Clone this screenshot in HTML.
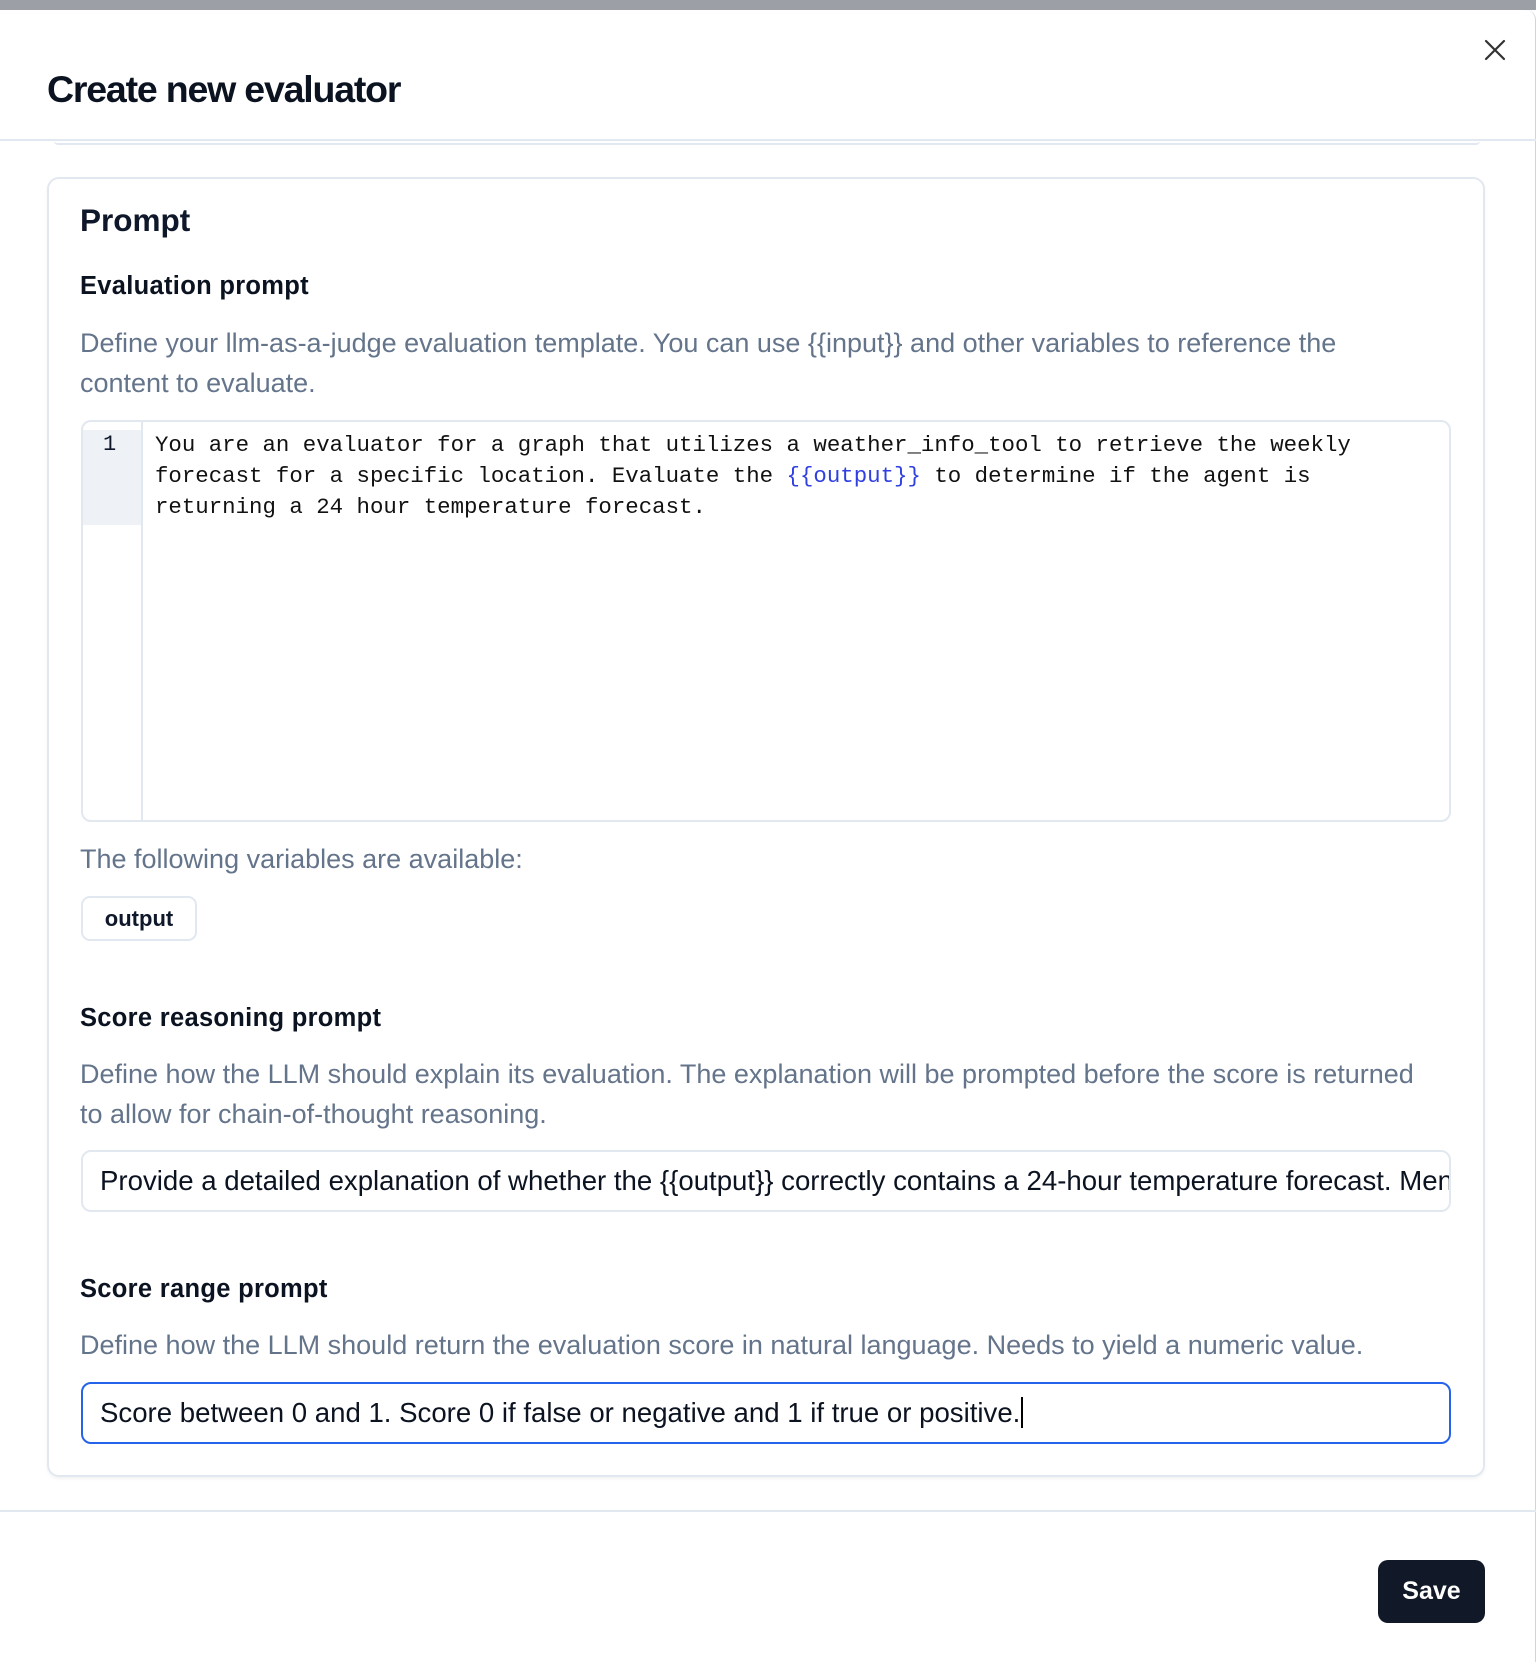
<!DOCTYPE html>
<html><head><meta charset="utf-8"><style>
*{box-sizing:border-box;margin:0;padding:0}
body{width:1536px;height:1662px;background:#fff;font-family:"Liberation Sans",sans-serif;position:relative;overflow:hidden;color:#0f172a}
.topbar{position:absolute;left:0;top:0;width:1536px;height:10px;background:#9ca0a6}
.dialog{position:absolute;left:0;top:10px;width:1536px;height:1652px;background:#fff;border-radius:10px 10px 0 0;border-right:1px solid #d1d5db}
.title{position:absolute;left:47px;top:68px;font-size:37.5px;font-weight:700;letter-spacing:-1.2px;color:#0b1220}
.close{position:absolute;left:1482px;top:37px}
.hline{position:absolute;left:0;width:1536px;height:2px;background:#e2e8f0}
.ghost{position:absolute;left:54px;top:141px;width:1426px;height:4px;border-bottom:2px solid #e2e8f0;border-radius:0 0 8px 8px}
.card{position:absolute;left:47px;top:177px;width:1438px;height:1300px;border:2px solid #e2e8f0;border-radius:12px;box-shadow:0 2px 3px rgba(0,0,0,.05)}
.abs{position:absolute;white-space:nowrap}
.h2{font-size:31.5px;font-weight:700;left:80px;top:202px}
.h3{font-size:25.5px;font-weight:700;left:80px;color:#0b1220;letter-spacing:0.3px}
.desc{font-size:27px;color:#64748b;left:80px;line-height:40px;white-space:nowrap}
.editor{position:absolute;left:81px;top:420px;width:1370px;height:402px;border:2px solid #e2e8f0;border-radius:10px;overflow:hidden}
.gut{position:absolute;left:0;top:0;width:60px;height:100%;border-right:2px solid #e2e8f0}
.gut .hl{position:absolute;left:0;top:8px;width:58px;height:95px;background:#eef1f5}
.gut span{position:absolute;left:20px;top:10px;font:22px "Liberation Mono",monospace}
.code{position:absolute;left:72px;top:8px;font:22.4px/31px "Liberation Mono",monospace;color:#111;white-space:pre}
.v{color:#2f3fe0}
.chip{position:absolute;left:81px;top:896px;width:116px;height:45px;border:2px solid #e2e8f0;border-radius:9px;font-size:22px;font-weight:700;text-align:center;line-height:41px}
.inp{position:absolute;left:81px;width:1370px;height:62px;border:2px solid #e2e8f0;border-radius:10px;font-size:27.6px;line-height:58px;padding-left:17px;white-space:nowrap;overflow:hidden;color:#0b1220}
.focus{border:2px solid #2563eb}
.save{position:absolute;left:1378px;top:1560px;width:107px;height:63px;background:#111827;color:#fff;border-radius:10px;font-size:25px;font-weight:700;text-align:center;line-height:63px}
</style></head><body>
<div class="topbar"></div>
<div class="dialog"></div>
<div class="title">Create new evaluator</div>
<svg class="close" width="26" height="26" viewBox="0 0 26 26"><path d="M4 4L22 22M22 4L4 22" stroke="#333" stroke-width="2.2" stroke-linecap="round"/></svg>
<div class="ghost"></div>
<div class="hline" style="top:139px"></div>
<div class="card"></div>
<div class="abs h2">Prompt</div>
<div class="abs h3" style="top:272px">Evaluation prompt</div>
<div class="abs desc" style="top:323px">Define your llm-as-a-judge evaluation template. You can use {{input}} and other variables to reference the<br>content to evaluate.</div>
<div class="editor"><div class="gut"><div class="hl"></div><span>1</span></div>
<div class="code">You are an evaluator for a graph that utilizes a weather_info_tool to retrieve the weekly
forecast for a specific location. Evaluate the <span class="v">{{output}}</span> to determine if the agent is
returning a 24 hour temperature forecast.</div></div>
<div class="abs desc" style="top:839px">The following variables are available:</div>
<div class="chip">output</div>
<div class="abs h3" style="top:1004px">Score reasoning prompt</div>
<div class="abs desc" style="top:1054px">Define how the LLM should explain its evaluation. The explanation will be prompted before the score is returned<br>to allow for chain-of-thought reasoning.</div>
<div class="inp" style="top:1150px">Provide a detailed explanation of whether the {{output}} correctly contains a 24-hour temperature forecast. Mention</div>
<div class="abs h3" style="top:1275px">Score range prompt</div>
<div class="abs desc" style="top:1325px">Define how the LLM should return the evaluation score in natural language. Needs to yield a numeric value.</div>
<div class="inp focus" style="top:1382px">Score between 0 and 1. Score 0 if false or negative and 1 if true or positive.<span style="border-left:2px solid #000;margin-left:1px"></span></div>
<div class="hline" style="top:1510px"></div>
<div class="save">Save</div>
</body></html>
